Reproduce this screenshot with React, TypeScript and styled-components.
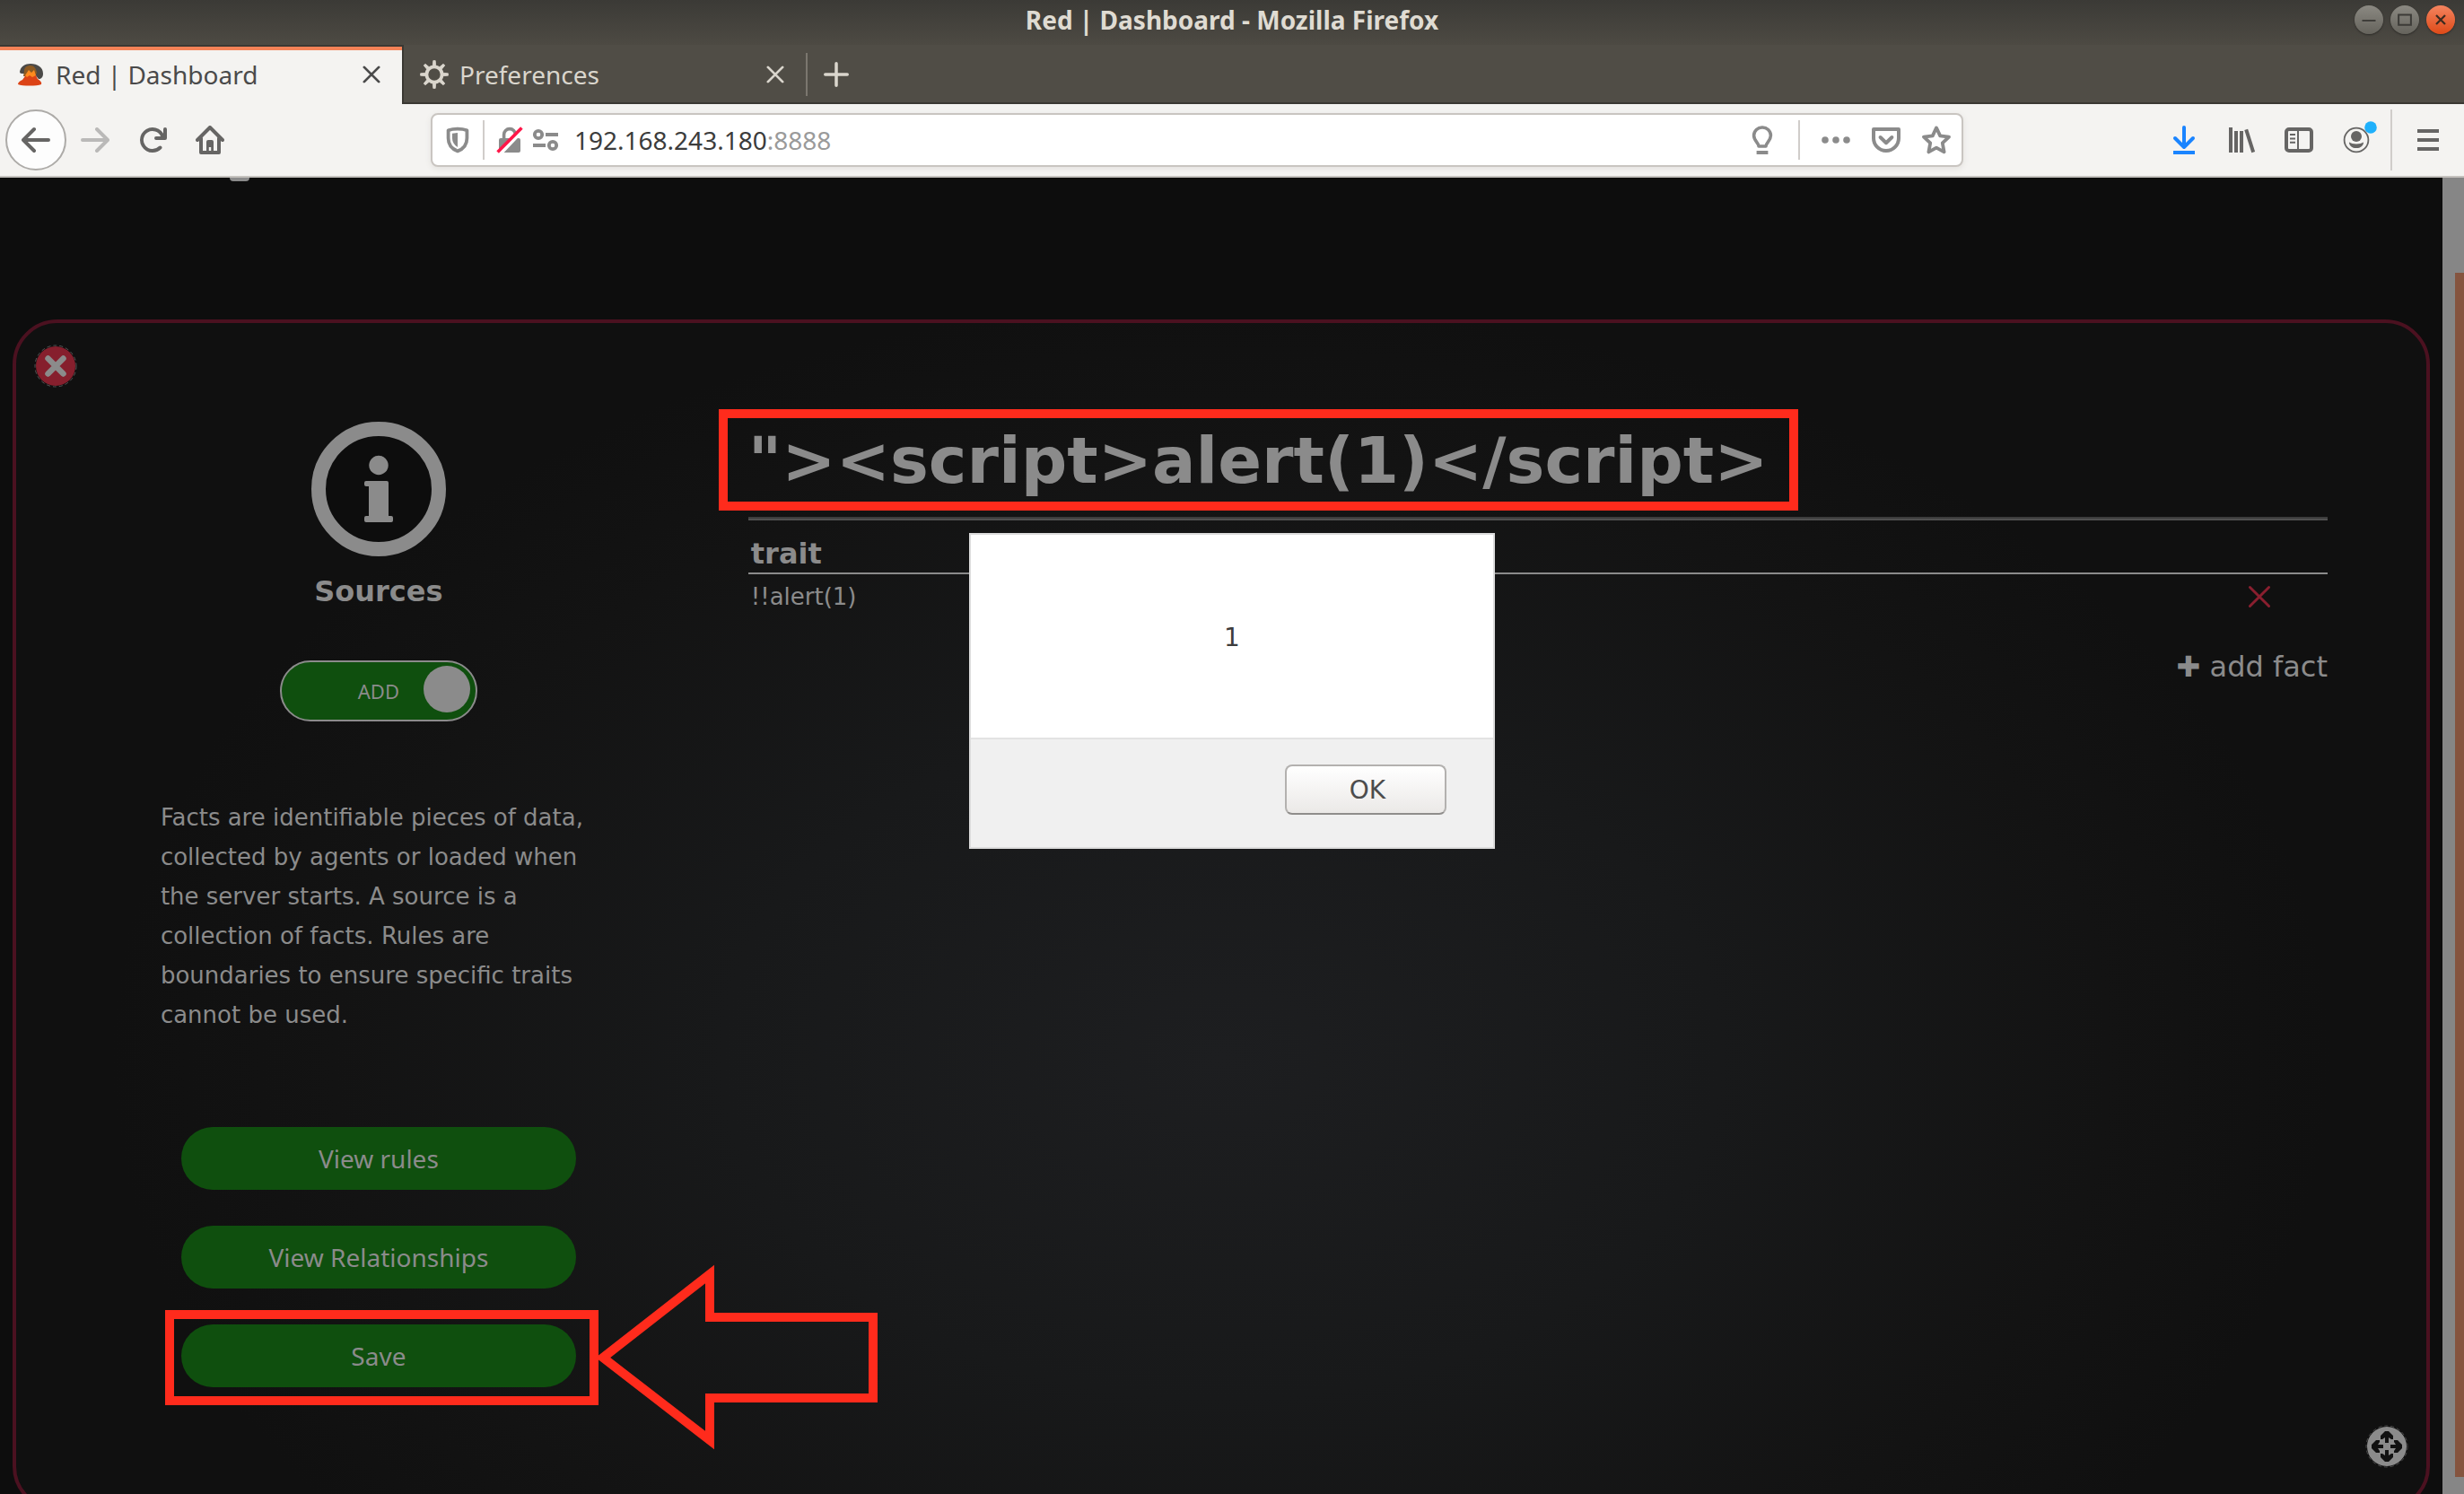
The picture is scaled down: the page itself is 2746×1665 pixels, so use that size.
import React, { useState } from "react";
import styled, { createGlobalStyle } from "styled-components";

const ui = `"Noto Sans", "Open Sans", sans-serif`;
const page = `"DejaVu Sans", sans-serif`;
const ink = "#8b8b8b";
const marker = "#ff2b1c";

const GlobalStyle = createGlobalStyle`
  * { box-sizing: border-box; }
  body { margin: 0; background: #0d0d0d; overflow: hidden; }
  button { border: 0; padding: 0; background: none; font: inherit; color: inherit; cursor: pointer; }
  svg { display: block; }
`;

const Window = styled.div`
  display: flex;
  flex-direction: column;
  height: 100vh;
  font-family: ${ui};
  font-size: 28px;
`;

/* ---------- browser chrome ---------- */

const TitleBar = styled.header`
  display: grid;
  grid-template-columns: 1fr auto 1fr;
  align-items: center;
  height: 50px;
  padding: 0 10px 6px;
  background: linear-gradient(#3b3a36, #4d4a43);
  color: #dfdbd2;
`;

const WindowTitle = styled.div`
  grid-column: 2;
  font-weight: 700;
  line-height: 40px;
`;

const WindowControls = styled.div`
  display: flex;
  justify-content: flex-end;
  gap: 8px;
`;

const WindowControl = styled.button<{ $danger?: boolean }>`
  display: grid;
  place-items: center;
  width: 32px;
  height: 32px;
  border-radius: 50%;
  box-shadow: 0 1px 2px #2b2a27;
  background: ${(p) => (p.$danger ? "linear-gradient(#f4845f, #de4a18)" : "linear-gradient(#8b8982, #65635c)")};
`;

const TabStrip = styled.div`
  display: flex;
  height: 66px;
  background: #504d46;
  box-shadow: inset 0 -2px #3a3833;
`;

const Tab = styled.div<{ $active?: boolean }>`
  display: flex;
  align-items: center;
  width: 450px;
  padding: 0 24px 0 18px;
  color: ${(p) => (p.$active ? "#4a4a4a" : "#dad6cd")};
  background: ${(p) => (p.$active ? "linear-gradient(#3a3833 2px, #f58257 2px 6px, #f4f3f1 6px)" : "none")};
  border-right: 2px solid ${(p) => (p.$active ? "#3a3833" : "transparent")};
`;

const TabLabel = styled.button`
  flex: 1;
  margin-left: 12px;
  text-align: left;
  line-height: 40px;
`;

const TabRule = styled.span`
  align-self: center;
  width: 2px;
  height: 48px;
  margin-left: -2px;
  background: #7b776f;
`;

const NewTab = styled.button`
  display: grid;
  place-items: center;
  width: 64px;
  color: #dad6cd;
`;

const NavBar = styled.nav`
  display: flex;
  align-items: center;
  height: 82px;
  padding-left: 6px;
  background: #f4f3f1;
  border-bottom: 2px solid #c5c2be;
  color: #666564;
`;

const BackButton = styled.button`
  display: grid;
  place-items: center;
  width: 68px;
  height: 68px;
  border: 2px solid #adaba8;
  border-radius: 50%;
  background: #fdfdfd;
`;

const ToolButton = styled.button<{ $width?: number; $dim?: boolean }>`
  position: relative;
  display: grid;
  place-items: center;
  flex: 0 0 ${(p) => p.$width ?? 64}px;
  height: 56px;
  opacity: ${(p) => (p.$dim ? 0.4 : 1)};
`;

const Spring = styled.span`
  flex: 0 1 214px;
`;

const Rule = styled.span<{ $height: number; $before?: number; $after?: number }>`
  flex: 0 0 2px;
  height: ${(p) => p.$height}px;
  margin: 0 ${(p) => p.$after ?? 0}px 0 ${(p) => p.$before ?? 0}px;
  background: #d0cdca;
`;

const UrlBar = styled.div`
  flex: 1;
  display: flex;
  align-items: center;
  height: 60px;
  border: 2px solid #c9c5c1;
  border-radius: 8px;
  background: #fff;
  box-shadow: 0 2px 6px #e2e0dd;
  color: #8b8b8b;
`;

const UrlInput = styled.input`
  field-sizing: content;
  margin-left: 12px;
  padding: 0;
  border: 0;
  outline: 0;
  background: none;
  font: 28px/40px ${ui};
  color: #3c3c3c;
`;

const UrlPort = styled.span`
  flex: 1;
  line-height: 40px;
  color: #9a9a9a;
`;

/* ---------- page ---------- */

const Viewport = styled.div`
  position: relative;
  flex: 1;
  min-height: 0;
  display: flex;
  background: #0d0d0d;
  font-family: ${page};
  color: ${ink};
`;

const Scroller = styled.main`
  position: relative;
  flex: 1;
  overflow: hidden;
  padding: 158px 14px 0;
`;

const HeadingTail = styled.span`
  position: absolute;
  top: 0;
  left: 256px;
  width: 22px;
  height: 4px;
  border-radius: 0 0 11px 11px;
  background: ${ink};
`;

const ScrollTrack = styled.div`
  width: 24px;
  padding: 106px 0 19px 14px;
  background: #868686;
`;

const ScrollThumb = styled.div`
  height: 100%;
  background: #85543f;
`;

const Panel = styled.section`
  position: relative;
  display: grid;
  grid-template-columns: 30% 70%;
  border: 4px solid #4b1120;
  border-radius: 50px;
  background: radial-gradient(ellipse 46% 64% at 50% 62%, #1d1e20, #18191a 45%, #131313 80%, #101010);
`;

const Badge = styled.button<{ $corner: "close" | "move" }>`
  position: absolute;
  ${(p) => (p.$corner === "close" ? "top: 24px; left: 20px;" : "bottom: 44px; right: 20px;")}
`;

const Sidebar = styled.aside`
  display: flex;
  flex-direction: column;
  align-items: center;
  padding: 110px 0 134px 2px;
`;

const SectionName = styled.h2`
  margin: 19px 0 57px;
  font-size: 32px;
  line-height: 40px;
`;

const Switch = styled.label`
  position: relative;
  display: grid;
  place-items: center;
  width: 220px;
  height: 68px;
  border: 2px solid ${ink};
  border-radius: 34px;
  background: #0f4f0e;
  font: 22px/32px ${ui};
  cursor: pointer;

  input {
    position: absolute;
    top: 4px;
    left: 6px;
    width: 52px;
    height: 52px;
    margin: 0;
    appearance: none;
    border-radius: 50%;
    background: ${ink};
  }
  input:checked {
    left: auto;
    right: 6px;
  }
`;

const Blurb = styled.p`
  width: 486px;
  margin: 85px 0 103px;
  font-size: 26px;
  line-height: 44px;
`;

const Actions = styled.div`
  display: grid;
  gap: 40px;
  width: 440px;
`;

const Action = styled.button`
  width: 100%;
  height: 70px;
  border-radius: 35px;
  background: #0f4f0e;
  font: 28px/40px ${ui};
`;

const Marked = styled.div`
  position: relative;
`;

const MarkFrame = styled.span<{ $inset: string }>`
  position: absolute;
  inset: ${(p) => p.$inset};
  border: 10px solid ${marker};
  pointer-events: none;
`;

const MarkArrow = styled.svg`
  position: absolute;
  left: 458px;
  top: -76px;
`;

const Content = styled.div`
  padding: 111px 110px 0 10px;
`;

const TitleRow = styled.div`
  display: flex;
`;

const SourceTitle = styled.h1`
  position: relative;
  margin: 0;
  font-size: 72px;
  line-height: 84px;
  white-space: nowrap;
`;

const Divider = styled.hr`
  height: 4px;
  margin: 21px 0 16px;
  border: 0;
  background: linear-gradient(#3c3c3c 50%, #505050 50%);
`;

const FactTable = styled.table`
  width: 100%;
  border-collapse: collapse;
`;

const HeadCell = styled.th`
  padding: 1px 3px;
  border-bottom: 2px solid ${ink};
  font-size: 32px;
  line-height: 40px;
  text-align: left;
`;

const Cell = styled.td`
  height: 50px;
  padding: 1px 3px 0;
  font-size: 26px;
  line-height: 40px;
`;

const RemoveCell = styled(Cell)`
  width: 152px;

  button {
    display: block;
    margin: 0 auto;
    color: #8a1f2f;
  }
`;

const AddFact = styled.button`
  display: block;
  margin: 34px 0 0 auto;
  font-size: 32px;
  line-height: 40px;
`;

/* ---------- alert ---------- */

const Alert = styled.div`
  position: absolute;
  top: 396px;
  left: 50%;
  width: 586px;
  transform: translateX(-50%);
  border: 2px solid #dcdcdc;
  background: #fff;
  color: #3c3c3c;
  font-size: 28px;
`;

const AlertMessage = styled.p`
  margin: 0;
  padding: 96px 0 92px;
  line-height: 38px;
  text-align: center;
`;

const AlertFooter = styled.div`
  display: flex;
  justify-content: flex-end;
  padding: 28px 52px 36px;
  border-top: 2px solid #e3e3e3;
  background: #f0f0f0;
`;

const OkButton = styled.button`
  width: 180px;
  height: 56px;
  padding-left: 4px;
  border: 2px solid #b3b1af;
  border-bottom-color: #8f8d8b;
  border-radius: 8px;
  background: linear-gradient(#fff, #ebe9e7);
  color: #4c4c4c;
`;

/* ---------- icons ---------- */

type IconProps = { size?: number; children: React.ReactNode };
const Icon = ({ size = 32, children }: IconProps) => (
  <svg width={size} height={size} viewBox="0 0 16 16" fill="currentColor" aria-hidden="true">
    {children}
  </svg>
);

const arrowPath =
  "M15 7H3.414l4.293-4.293a1 1 0 0 0-1.414-1.414l-6 6a1 1 0 0 0 0 1.414l6 6a1 1 0 0 0 1.414-1.414L3.414 9H15a1 1 0 0 0 0-2z";

const CrossIcon = ({ size = 20, weight = 2.2 }: { size?: number; weight?: number }) => (
  <Icon size={size}>
    <path d="M1.5 1.5l13 13M14.5 1.5l-13 13" stroke="currentColor" strokeWidth={weight} strokeLinecap="round" />
  </Icon>
);

const GearIcon = () => (
  <Icon>
    <circle cx="8" cy="8" r="4.3" fill="none" stroke="currentColor" strokeWidth="1.9" />
    {[0, 45, 90, 135, 180, 225, 270, 315].map((a) => (
      <path key={a} d="M7.1 3.4L7.4.3h1.2l.3 3.1z" transform={`rotate(${a} 8 8)`} stroke="currentColor" strokeWidth=".4" />
    ))}
  </Icon>
);

const VolcanoIcon = () => (
  <svg width="32" height="32" viewBox="0 0 32 32" aria-hidden="true">
    <path d="M4 13c1-6 6-9 12-9 8 0 14 4 14 11 0 4-2 6-5 6l-5-6H6c-1 0-2-1-2-2z" fill="#4b4a48" />
    <path d="M9 12c0-4 3-6 7-6s6 3 7 8l-2 4H8z" fill="#8d5a22" />
    <path d="M12 15h9l3 6c3 2 5 4 4 6-5 2-21 2-26 0 0-2 2-4 5-5z" fill="#dc4316" />
    <path d="M10 17l4-6 3 3 3-3 2 6-4 2-3-2-3 2z" fill="#ff8a1e" />
  </svg>
);

const MoveIcon = () => (
  <svg width="48" height="48" viewBox="0 0 48 48" aria-hidden="true">
    <circle cx="24" cy="24" r="22" fill={ink} />
    <circle cx="24" cy="24" r="23" fill="none" stroke="#4c4c4c" strokeWidth="1" strokeDasharray="4 3" />
    {[0, 90, 180, 270].map((a) => (
      <path key={a} d="M22 20v-6l-3 2h-2v-4l5-5h4l5 5v4h-2l-3-2v6z" fill="#111" transform={`rotate(${a} 24 24)`} />
    ))}
  </svg>
);

const CloseBadgeIcon = () => (
  <svg width="48" height="48" viewBox="0 0 48 48" aria-hidden="true">
    <circle cx="24" cy="24" r="22" fill="#861f2d" />
    <circle cx="24" cy="24" r="23" fill="none" stroke="#555" strokeWidth="1" strokeDasharray="4 3" />
    <path d="M15.500 15.500l17 17M32.500 15.500l-17 17" stroke={ink} strokeWidth="6.500" strokeLinecap="round" />
  </svg>
);

const InfoIcon = () => (
  <svg width="150" height="150" viewBox="0 0 150 150" fill={ink} aria-hidden="true">
    <circle cx="75" cy="75" r="67" fill="#0d0d0d" stroke={ink} strokeWidth="16" />
    <circle cx="75" cy="48.500" r="10.700" />
    <path d="M61 66h23a2 2 0 0 1 2 2v37h3a2 2 0 0 1 2 2v3a2 2 0 0 1-2 2H61a2 2 0 0 1-2-2v-3a2 2 0 0 1 2-2h3V72h-3a2 2 0 0 1-2-2v-2a2 2 0 0 1 2-2z" />
  </svg>
);

export default function App() {
  const [host, setHost] = useState("192.168.243.180");
  const [adding, setAdding] = useState(true);

  return (
    <>
      <GlobalStyle />
      <Window>
        <TitleBar>
          <WindowTitle>Red | Dashboard - Mozilla Firefox</WindowTitle>
          <WindowControls>
            <WindowControl aria-label="Minimize">
              <Icon size={20}><path d="M2 8h12v1.500H2z" fill="#3c3b37" /></Icon>
            </WindowControl>
            <WindowControl aria-label="Maximize">
              <Icon size={20}><path d="M2.500 3.500h11v9h-11z" fill="none" stroke="#3c3b37" strokeWidth="1.600" /></Icon>
            </WindowControl>
            <WindowControl $danger aria-label="Close window">
              <Icon size={20}><path d="M4 4l8 8M12 4l-8 8" stroke="#3c2b20" strokeWidth="1.800" /></Icon>
            </WindowControl>
          </WindowControls>
        </TitleBar>

        <TabStrip>
          <Tab $active>
            <VolcanoIcon />
            <TabLabel>Red | Dashboard</TabLabel>
            <button aria-label="Close Red | Dashboard"><CrossIcon /></button>
          </Tab>
          <Tab>
            <GearIcon />
            <TabLabel>Preferences</TabLabel>
            <button aria-label="Close Preferences"><CrossIcon /></button>
          </Tab>
          <TabRule />
          <NewTab aria-label="New tab">
            <Icon size={28}><path d="M8 1v14M1 8h14" stroke="currentColor" strokeWidth="2" strokeLinecap="round" /></Icon>
          </NewTab>
        </TabStrip>

        <NavBar>
          <BackButton aria-label="Back"><Icon><path d={arrowPath} /></Icon></BackButton>
          <ToolButton $dim aria-label="Forward">
            <Icon><path d={arrowPath} transform="matrix(-1 0 0 1 16 0)" /></Icon>
          </ToolButton>
          <ToolButton aria-label="Reload">
            <Icon>
              <path d="M15 1a1 1 0 0 0-1 1v2.418A6.995 6.995 0 1 0 8 15a6.954 6.954 0 0 0 4.950-2.050 1 1 0 0 0-1.414-1.414A5.019 5.019 0 1 1 12.549 6H10a1 1 0 0 0 0 2h5a1 1 0 0 0 1-1V2a1 1 0 0 0-1-1z" />
            </Icon>
          </ToolButton>
          <ToolButton aria-label="Home">
            <Icon>
              <path d="M1 8l7-7 7 7M3 7v8h10V7" fill="none" stroke="currentColor" strokeWidth="2" strokeLinecap="round" strokeLinejoin="round" />
              <path d="M6 15V9a1 1 0 0 1 1-1h2a1 1 0 0 1 1 1v6H8.600v-3H7.400v3z" />
            </Icon>
          </ToolButton>
          <Spring />
          <UrlBar>
            <ToolButton $width={56} aria-label="Tracking protection">
              <Icon>
                <path d="M8 1.800c2 0 3.800.3 5.200.8V7c0 3.500-2 6-5.200 7.200C4.800 13 2.800 10.500 2.800 7V2.600C4.200 2.100 6 1.800 8 1.800z" fill="none" stroke="currentColor" strokeWidth="1.900" strokeLinejoin="round" />
                <path d="M8 4v8C6 10.800 5 9 5 7V4.400z" />
              </Icon>
            </ToolButton>
            <Rule $height={44} $after={8} />
            <ToolButton $width={40} aria-label="Connection is not secure">
              <Icon>
                <path d="M4.800 7V5a3.200 3.200 0 0 1 6.400 0v2" fill="none" stroke="currentColor" strokeWidth="1.800" />
                <rect x="2" y="7" width="12" height="8" rx="1" />
                <path d="M2.600 15.600L15 2.600" stroke="#fff" strokeWidth="2.400" />
                <path d="M1.300 14.800L14.700 1.200" stroke="#ff1648" strokeWidth="1.800" />
              </Icon>
            </ToolButton>
            <ToolButton $width={40} aria-label="Site permissions">
              <Icon>
                <g fill="none" stroke="currentColor" strokeWidth="1.900">
                  <circle cx="4" cy="5" r="2.100" />
                  <circle cx="12" cy="11" r="2.100" />
                  <path d="M8 5h7M1 11h7" />
                </g>
              </Icon>
            </ToolButton>
            <UrlInput aria-label="Address" value={host} onChange={(e) => setHost(e.target.value)} />
            <UrlPort>:8888</UrlPort>
            <ToolButton $width={56} aria-label="Tips">
              <Icon>
                <path d="M6 11.500c0-2-2.700-3-2.700-6A4.600 4.600 0 0 1 8 1a4.600 4.600 0 0 1 4.700 4.500c0 3-2.700 4-2.700 6z" fill="none" stroke="currentColor" strokeWidth="1.800" strokeLinejoin="round" />
                <path d="M4.800 14h6.400v2H4.800z" />
              </Icon>
            </ToolButton>
            <Rule $height={44} $before={12} $after={12} />
            <ToolButton $width={56} aria-label="Page actions">
              <Icon><circle cx="2" cy="8" r="1.900" /><circle cx="8" cy="8" r="1.900" /><circle cx="14" cy="8" r="1.900" /></Icon>
            </ToolButton>
            <ToolButton $width={56} aria-label="Save to Pocket">
              <Icon>
                <g fill="none" stroke="currentColor" strokeWidth="2" strokeLinejoin="round" strokeLinecap="round">
                  <path d="M1 2h14v5a7 7 0 0 1-14 0z" />
                  <path d="M4.800 6.500L8 9.600l3.200-3.100" />
                </g>
              </Icon>
            </ToolButton>
            <ToolButton $width={56} aria-label="Bookmark this page">
              <Icon>
                <path d="M8 1.200l2.100 4.500 4.900.6-3.600 3.400.9 5L8 12.300l-4.300 2.400.9-5L1 6.300l4.900-.6z" fill="none" stroke="currentColor" strokeWidth="1.900" strokeLinejoin="round" />
              </Icon>
            </ToolButton>
          </UrlBar>
          <Spring />
          <ToolButton aria-label="Downloads">
            <Icon>
              <path d="M8 1v11M3 7l5 5 5-5" fill="none" stroke="#1a84ff" strokeWidth="2" strokeLinecap="round" strokeLinejoin="round" />
              <path d="M2 14h12v2H2z" fill="#1a84ff" />
            </Icon>
          </ToolButton>
          <ToolButton aria-label="Library">
            <Icon>
              <path d="M2 1v14M5 3v12M8 3v12M10.600 2.200l4 12.600" fill="none" stroke="currentColor" strokeWidth="2" />
            </Icon>
          </ToolButton>
          <ToolButton aria-label="Sidebars">
            <Icon>
              <rect x="1" y="2" width="14" height="12" rx="1.500" fill="none" stroke="currentColor" strokeWidth="2" />
              <path d="M7.500 2v12M3 5h3M3 7.200h3M3 9.400h3" stroke="currentColor" strokeWidth="1" />
            </Icon>
          </ToolButton>
          <ToolButton aria-label="Account">
            <svg width="48" height="48" viewBox="0 0 24 24" fill="currentColor" aria-hidden="true">
              <circle cx="12" cy="12" r="6.700" fill="none" stroke="currentColor" strokeWidth=".9" />
              <circle cx="12" cy="10" r="3" />
              <path d="M8 13.200c1 .6 2.300 1 4 1s3-.4 4-1c0 2-1.600 3.300-4 3.300s-4-1.300-4-3.300z" />
              <circle cx="20" cy="5" r="3.400" fill="#1fb0fb" />
            </svg>
          </ToolButton>
          <Rule $height={68} $before={6} />
          <ToolButton $width={80} aria-label="Open menu">
            <Icon><path d="M2 2h12v2H2zM2 7h12v2H2zM2 12h12v2H2z" /></Icon>
          </ToolButton>
        </NavBar>

        <Viewport>
          <Scroller>
            <HeadingTail />
            <Panel>
              <Badge $corner="close" aria-label="Close section"><CloseBadgeIcon /></Badge>
              <Sidebar>
                <InfoIcon />
                <SectionName>Sources</SectionName>
                <Switch>
                  ADD
                  <input type="checkbox" checked={adding} onChange={(e) => setAdding(e.target.checked)} />
                </Switch>
                <Blurb>
                  Facts are identifiable pieces of data, collected by agents or loaded when the server starts. A source
                  is a collection of facts. Rules are boundaries to ensure specific traits cannot be used.
                </Blurb>
                <Actions>
                  <Action>View rules</Action>
                  <Action>View Relationships</Action>
                  <Marked>
                    <Action>Save</Action>
                    <MarkFrame $inset="-16px -25px -20px -18px" />
                    <MarkArrow width="330" height="226" viewBox="0 0 330 226" aria-hidden="true">
                      <path
                        d="M12 113L131 20V68H313V158H131V205Z"
                        fill="none"
                        stroke={marker}
                        strokeWidth="10"
                        strokeMiterlimit="10"
                      />
                    </MarkArrow>
                  </Marked>
                </Actions>
              </Sidebar>
              <Content>
                <TitleRow>
                  <SourceTitle>
                    {'"><script>alert(1)</script>'}
                    <MarkFrame $inset="-15px -33px -14px -33px" />
                  </SourceTitle>
                </TitleRow>
                <Divider />
                <FactTable>
                  <thead>
                    <tr>
                      <HeadCell colSpan={2}>trait</HeadCell>
                    </tr>
                  </thead>
                  <tbody>
                    <tr>
                      <Cell>!!alert(1)</Cell>
                      <RemoveCell>
                        <button aria-label="Remove fact"><CrossIcon size={26} weight={1.800} /></button>
                      </RemoveCell>
                    </tr>
                  </tbody>
                </FactTable>
                <AddFact>✚ add fact</AddFact>
              </Content>
              <Badge $corner="move" aria-label="Move section"><MoveIcon /></Badge>
            </Panel>
          </Scroller>
          <ScrollTrack><ScrollThumb /></ScrollTrack>
          <Alert role="alertdialog" aria-label="Alert">
            <AlertMessage>1</AlertMessage>
            <AlertFooter><OkButton>OK</OkButton></AlertFooter>
          </Alert>
        </Viewport>
      </Window>
    </>
  );
}
